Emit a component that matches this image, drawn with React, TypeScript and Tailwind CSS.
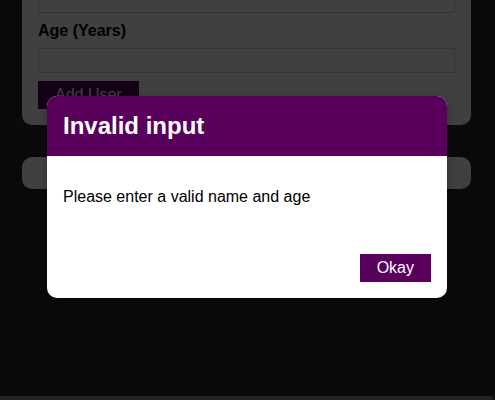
export default function App() {
  return (
    <div
      className="relative h-[400px] w-[495px] overflow-hidden bg-[#292929] text-base"
      style={{ fontFamily: '"Liberation Sans", Arial, sans-serif' }}
    >
      <div className="flex flex-col gap-8 px-[22px] pr-[24px] -mt-[12px]">
        <form className="rounded-b-[10px] bg-white px-4 pb-4">
          <input className="mb-2 block h-[25px] w-full border border-[#cccccc] p-[2px]" />
          <label className="mb-2 block font-bold leading-[19px] text-black">Age (Years)</label>
          <input className="mb-2 block h-[25px] w-full border border-[#cccccc] p-[2px]" />
          <button
            type="button"
            className="h-[28px] border border-[#4f005f] bg-[#4f005f] px-4 leading-[18px] text-white"
          >
            Add User
          </button>
        </form>
        <div className="h-[32px] rounded-[10px] bg-white shadow-[0_2px_8px_rgba(0,0,0,0.26)]" />
      </div>

      <div className="absolute inset-0 bg-black/75" />

      <div className="absolute left-[47px] top-[96px] w-[400px] overflow-hidden rounded-[10px] bg-white shadow-[0_2px_8px_rgba(0,0,0,0.26)]">
        <header className="bg-[#58005c] p-4">
          <h2 className="text-[24px] font-bold leading-[28px] text-white">Invalid input</h2>
        </header>
        <div className="p-4">
          <p className="my-4 leading-[18px] text-black">Please enter a valid name and age</p>
        </div>
        <footer className="flex justify-end p-4">
          <button
            type="button"
            className="h-[28px] border border-[#58005c] bg-[#58005c] px-4 leading-[18px] text-white"
          >
            Okay
          </button>
        </footer>
      </div>

      <div className="absolute bottom-0 left-0 h-[4px] w-[493px] bg-[#222222]" />
    </div>
  );
}
